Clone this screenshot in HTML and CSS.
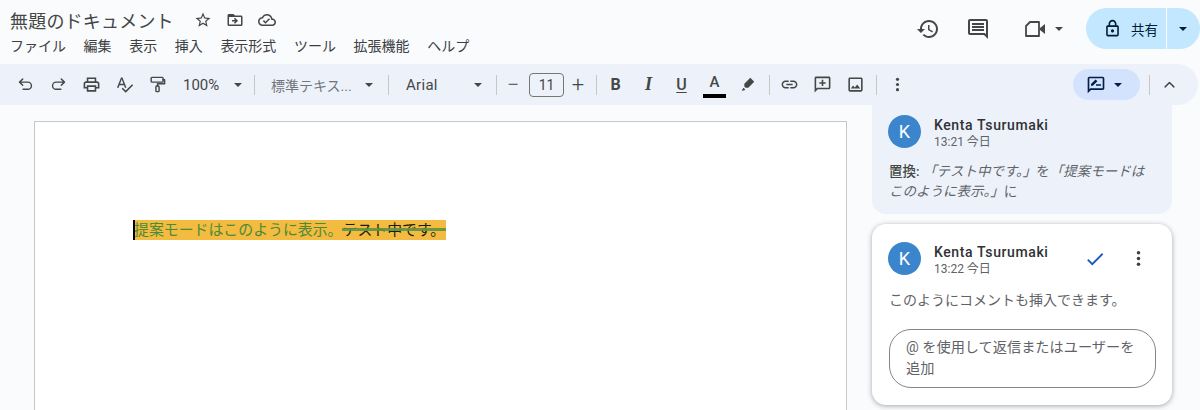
FILE: index.html
```html
<!DOCTYPE html>
<html lang="ja">
<head>
    <meta charset="UTF-8">
    <title>無題のドキュメント</title>
    <link rel="stylesheet" href="styles.css">
</head>
<body>

<header class="top-bar">
    <div class="title-area">
        <div class="title-row">
            <span class="doc-title">無題のドキュメント</span>
            <svg class="title-icon star" viewBox="0 0 24 24"><path d="M22 9.24l-7.19-.62L12 2 9.19 8.63 2 9.24l5.46 4.73L5.82 21 12 17.27 18.18 21l-1.63-7.03L22 9.24zM12 15.4l-3.76 2.27 1-4.28-3.32-2.88 4.38-.38L12 6.1l1.71 4.04 4.38.38-3.32 2.88 1 4.28L12 15.4z"/></svg>
            <svg class="title-icon" viewBox="0 0 24 24"><path d="M20 6h-8l-2-2H4c-1.1 0-1.99.9-1.99 2L2 18c0 1.1.9 2 2 2h16c1.1 0 2-.9 2-2V8c0-1.1-.9-2-2-2zm0 12H4V8h16v10zm-8.01-9l-1.41 1.41L12.16 12H8v2h4.16l-1.59 1.59L11.99 17 16 13.01 11.99 9z"/></svg>
            <svg class="title-icon" viewBox="0 0 24 24"><path d="M19.35 10.04C18.67 6.59 15.64 4 12 4 9.11 4 6.6 5.64 5.35 8.04 2.34 8.36 0 10.91 0 14c0 3.31 2.69 6 6 6h13c2.76 0 5-2.24 5-5 0-2.64-2.05-4.78-4.65-4.96zM19 18H6c-2.21 0-4-1.79-4-4 0-2.05 1.53-3.76 3.56-3.97l1.07-.11.5-.95C8.08 7.14 9.94 6 12 6c2.62 0 4.88 1.86 5.39 4.43l.3 1.5 1.53.11c1.56.1 2.78 1.41 2.78 2.96 0 1.65-1.35 3-3 3zm-9-3.82l-2.09-2.09L6.5 13.5 10 17l6.01-6.01-1.41-1.41z"/></svg>
        </div>
        <nav class="menu">
            <span>ファイル</span>
            <span>編集</span>
            <span>表示</span>
            <span>挿入</span>
            <span>表示形式</span>
            <span>ツール</span>
            <span>拡張機能</span>
            <span>ヘルプ</span>
        </nav>
    </div>
    <div class="top-actions">
        <svg class="top-icon" viewBox="0 0 24 24"><path d="M13 3c-4.97 0-9 4.03-9 9H1l3.89 3.89.07.14L9 12H6c0-3.87 3.13-7 7-7s7 3.13 7 7-3.13 7-7 7c-1.93 0-3.68-.79-4.94-2.06l-1.42 1.42C8.27 19.99 10.51 21 13 21c4.97 0 9-4.03 9-9s-4.03-9-9-9zm-1 5v5l4.28 2.54.72-1.21-3.5-2.08V8H12z"/></svg>
        <svg class="top-icon comment-icon" viewBox="0 0 24 24"><path d="M21.99 4c0-1.1-.89-2-1.99-2H4c-1.1 0-2 .9-2 2v12c0 1.1.9 2 2 2h14l4 4-.01-18zM20 4v13.17L18.83 16H4V4h16zM6 12h12v2H6zm0-3h12v2H6zm0-3h12v2H6z"/></svg>
        <svg class="top-icon video-icon" viewBox="0 0 24 24"><path class="line" d="M7 5H16V19H3V9Z"/><path d="M17 11l5-4v10l-5-4z"/></svg>
        <span class="caret meet-caret"></span>
        <div class="share">
            <div class="share-main">
                <svg class="lock" viewBox="0 0 24 24"><path d="M18 8h-1V6c0-2.76-2.24-5-5-5S7 3.24 7 6v2H6c-1.1 0-2 .9-2 2v10c0 1.1.9 2 2 2h12c1.1 0 2-.9 2-2V10c0-1.1-.9-2-2-2zM9 6c0-1.66 1.34-3 3-3s3 1.34 3 3v2H9V6zm9 14H6V10h12v10zm-6-3c1.1 0 2-.9 2-2s-.9-2-2-2-2 .9-2 2 .9 2 2 2z"/></svg>
                <span>共有</span>
            </div>
            <div class="share-more"><span class="caret dark"></span></div>
        </div>
    </div>
</header>

<div class="toolbar">
    <span class="tb-btn"><svg viewBox="0 0 24 24"><path class="line" d="M8.5 5 4.5 9l4 4M4.5 9H15a4.5 4.5 0 0 1 0 9H9"/></svg></span>
    <span class="tb-btn"><svg viewBox="0 0 24 24"><path class="line" d="M15.5 5l4 4-4 4M19.5 9H9a4.5 4.5 0 0 0 0 9h6"/></svg></span>
    <span class="tb-btn"><svg viewBox="0 0 24 24"><path d="M19 8h-1V3H6v5H5c-1.66 0-3 1.34-3 3v6h4v4h12v-4h4v-6c0-1.66-1.34-3-3-3zM8 5h8v3H8V5zm8 12v2H8v-4h8v2zm2-2v-2H6v2H4v-4c0-.55.45-1 1-1h14c.55 0 1 .45 1 1v4h-2z"/></svg></span>
    <span class="tb-btn"><svg viewBox="0 0 24 24"><path d="M12.45 16h2.09L9.43 3H7.57L2.46 16h2.09l1.12-3h5.64l1.14 3zm-6.02-5L8.5 5.48 10.57 11H6.43zm15.16.59l-8.09 8.09L9.83 16l-1.41 1.41 5.09 5.09L23 13l-1.41-1.41z"/></svg></span>
    <span class="tb-btn"><svg viewBox="0 0 24 24"><rect class="line" x="4" y="3" width="15" height="6" rx="1"/><path class="line" d="M19 6h2v5h-9v3"/><rect class="line" x="10" y="14" width="4" height="7" rx="1"/></svg></span>

    <div class="select zoom-select"><span>100%</span><i class="caret"></i></div>
    <span class="sep"></span>
    <div class="select style-select"><span>標準テキス...</span><i class="caret"></i></div>
    <span class="sep"></span>
    <div class="select font-select"><span>Arial</span><i class="caret"></i></div>
    <span class="sep"></span>

    <span class="size-btn minus">−</span>
    <span class="size-box">11</span>
    <span class="size-btn plus">+</span>
    <span class="sep sep-b"></span>

    <span class="tb-btn fmt bold">B</span>
    <span class="tb-btn fmt italic">I</span>
    <span class="tb-btn fmt under">U</span>
    <span class="tb-btn fmt color">A<i class="color-bar"></i></span>
    <span class="tb-btn"><svg viewBox="0 0 24 24"><path d="M15.5 3.5l5 5-7.5 7.5h-3.5l-1.5-1.5V11zM7 16l2 2-1 1.5H4.5z"/></svg></span>
    <span class="sep sep-l"></span>

    <span class="tb-btn"><svg viewBox="0 0 24 24"><path d="M3.9 12c0-1.71 1.39-3.1 3.1-3.1h4V7H7c-2.76 0-5 2.24-5 5s2.24 5 5 5h4v-1.9H7c-1.71 0-3.1-1.39-3.1-3.1zM8 13h8v-2H8v2zm9-6h-4v1.9h4c1.71 0 3.1 1.39 3.1 3.1s-1.39 3.1-3.1 3.1h-4V17h4c2.76 0 5-2.24 5-5s-2.24-5-5-5z"/></svg></span>
    <span class="tb-btn"><svg viewBox="0 0 24 24"><path d="M20 2H4c-1.1 0-2 .9-2 2v18l4-4h14c1.1 0 2-.9 2-2V4c0-1.1-.9-2-2-2zm0 14H5.17L4 17.17V4h16v12zM11 14h2v-3h3V9h-3V6h-2v3H8v2h3z"/></svg></span>
    <span class="tb-btn"><svg viewBox="0 0 24 24"><path d="M19 5v14H5V5h14m0-2H5c-1.1 0-2 .9-2 2v14c0 1.1.9 2 2 2h14c1.1 0 2-.9 2-2V5c0-1.1-.9-2-2-2zm-4.86 8.86l-3 3.87L9 13.14 6 17h12l-3.86-5.14z"/></svg></span>
    <span class="sep sep-m"></span>
    <span class="tb-btn"><svg viewBox="0 0 24 24"><circle cx="12" cy="5.5" r="2"/><circle cx="12" cy="12" r="2"/><circle cx="12" cy="18.5" r="2"/></svg></span>

    <div class="toolbar-end">
        <div class="mode-btn">
            <svg viewBox="0 0 24 24"><path d="M20 2H4c-1.1 0-2 .9-2 2v18l4-4h14c1.1 0 2-.9 2-2V4c0-1.1-.9-2-2-2zm0 14H5.17L4 17.17V4h16v12z"/><path d="M6 13v-2.2l5.5-5.5 2.2 2.2L8.2 13zM12 13h6v-2h-6z"/></svg>
            <i class="caret navy"></i>
        </div>
        <span class="sep"></span>
        <span class="tb-btn"><svg viewBox="0 0 24 24"><path class="line" d="M6.5 15l5.5-5.5 5.5 5.5"/></svg></span>
    </div>
</div>

<main class="workspace">
    <section class="page">
        <p class="doc-line"><span class="cursor"></span><span class="added">提案モードはこのように表示。</span><span class="removed">テスト中です。</span></p>
    </section>

    <aside class="comments">
        <article class="card suggestion">
            <div class="card-head">
                <span class="avatar">K</span>
                <div class="who">
                    <div class="name">Kenta Tsurumaki</div>
                    <div class="time">13:21 今日</div>
                </div>
            </div>
            <p class="card-text"><b>置換:</b> <em>「テスト中です。」</em>を<em>「提案モードは<br>このように表示。」</em>に</p>
        </article>

        <article class="card active">
            <div class="card-head">
                <span class="avatar">K</span>
                <div class="who">
                    <div class="name">Kenta Tsurumaki</div>
                    <div class="time">13:22 今日</div>
                </div>
                <svg class="resolve" viewBox="0 0 24 24"><path d="M9 16.17L4.83 12l-1.42 1.41L9 19 21 7l-1.41-1.41z"/></svg>
                <svg class="more" viewBox="0 0 24 24"><circle cx="12" cy="5.5" r="2"/><circle cx="12" cy="12" r="2"/><circle cx="12" cy="18.5" r="2"/></svg>
            </div>
            <p class="card-body">このようにコメントも挿入できます。</p>
            <div class="reply">@ を使用して返信またはユーザーを追加</div>
        </article>
    </aside>
</main>

</body>
</html>
```

FILE: styles.css
```css
* { box-sizing: border-box; }
html, body { margin: 0; height: 100%; }
body {
    background: #f9fbfd; color: #444746; overflow: hidden;
    font-family: Roboto, "Noto Sans CJK JP", sans-serif;
}
svg { display: block; fill: #444746; }

/* top */
.top-bar { height: 64px; display: flex; justify-content: space-between; }
.title-area { padding: 8px 0 0 10px; }
.title-row { display: flex; align-items: center; height: 23px; }
.doc-title { font-size: 18px; color: #444746; width: 164px; white-space: nowrap; letter-spacing: 0.2px; }
.title-icon { width: 18px; height: 18px; margin-left: 11px; margin-right: 3px; }
.title-icon.star { margin-left: 20px; }
.menu { display: flex; gap: 17.6px; margin-top: 5px; font-size: 14px; line-height: 20px; color: #3c4043; }

.top-actions { display: flex; align-items: center; height: 57px; }
.top-icon { width: 24px; height: 24px; margin-right: 26px; }
.comment-icon { margin-right: 33px; }
.video-icon { margin-right: 8px; }
.meet-caret { margin-right: 23px; }
.caret {
    display: inline-block; width: 0; height: 0;
    border-left: 4.5px solid transparent; border-right: 4.5px solid transparent;
    border-top: 4.5px solid #444746;
}
.caret.dark { border-top-color: #001d35; }
.caret.navy { border-top-color: #041e49; }

.share { display: flex; width: 114px; height: 41px; background: #c2e7ff; border-radius: 21px; color: #001d35; }
.share-main { width: 81px; display: flex; align-items: center; padding-left: 17px; font-size: 13.5px; border-right: 1px solid #f9fbfd; }
.share-main span { margin-left: 9px; }
.lock { width: 19px; height: 19px; fill: #001d35; }
.share-more { flex: 1; display: flex; align-items: center; justify-content: center; padding-right: 1px; }

/* toolbar */
.toolbar {
    position: relative; z-index: 2;
    height: 41px; margin-right: 2px; padding-left: 9px;
    display: flex; align-items: center;
    background: #edf2fa; border-radius: 0 21px 21px 0;
}
.tb-btn { width: 33px; height: 32px; display: flex; align-items: center; justify-content: center; flex-shrink: 0; }
.tb-btn svg { width: 19px; height: 19px; }
.line { fill: none; stroke: #444746; stroke-width: 1.8; stroke-linecap: round; stroke-linejoin: round; }
.sep { width: 1px; height: 20px; background: #c7c7c7; margin: 0 8px; flex-shrink: 0; }
.select { display: flex; align-items: center; justify-content: space-between; font-size: 14px; flex-shrink: 0; white-space: nowrap; }
.zoom-select { width: 72px; padding: 0 4px 0 9px; font-size: 15px; }
.style-select { width: 117px; padding: 0 7px 0 8px; color: #70757a; }
.font-select { width: 91px; padding: 0 6px 0 9px; font-size: 15px; letter-spacing: 0.3px; }
.size-btn { width: 16px; text-align: center; font-size: 22px; font-weight: 300; line-height: 24px; flex-shrink: 0; }
.plus { width: 28px; }
.size-box {
    width: 35px; height: 24px; margin: 0 0 0 8px; flex-shrink: 0;
    border: 1px solid #747775; border-radius: 4px;
    font-size: 14px; line-height: 22px; text-align: center;
}
.sep-b { margin: 0 2px 0 4px; }
.sep-l { margin: 0 3px 0 5px; }
.sep-m { margin: 0 4px 0 4px; }
.fmt { font-size: 16px; color: #444746; position: relative; }
.bold { font-weight: 700; }
.italic { font-family: "Liberation Serif", serif; font-style: italic; font-weight: 700; font-size: 18px; }
.under { text-decoration: underline; font-weight: 500; text-underline-offset: 2px; }
.color { align-items: flex-start; padding-top: 5px; font-size: 15px; line-height: 16px; font-weight: 500; }
.color-bar { position: absolute; left: 5px; right: 5px; bottom: 3px; height: 4px; background: #000; }

.toolbar-end { margin-left: auto; display: flex; align-items: center; }
.mode-btn {
    width: 67px; height: 31px; background: #d3e3fd; border-radius: 16px;
    display: flex; align-items: center; gap: 8px; padding-left: 13px;
}
.mode-btn svg { width: 20px; height: 20px; fill: #041e49; }
.toolbar-end .sep { margin: 0 3px 0 9px; }
.toolbar-end .tb-btn { margin-right: 12px; }

/* doc area: the page runs on below the window, so it is cut off here */
.workspace { display: flex; align-items: flex-start; height: 305px; padding-left: 34px; overflow: hidden; }
.page {
    width: 813px; height: 320px; margin-top: 16px; flex-shrink: 0;
    background: #fff; border: 1px solid #c7c7c7; padding: 98px 0 0 98px;
}
.doc-line { display: flex; position: relative; width: 313px; margin: 0; font-size: 14.9px; line-height: 20px; background: #f3bb3f; white-space: nowrap; }
.cursor { position: absolute; left: 0; top: 0; width: 2px; height: 20px; background: #000; }
.added { color: #4a8a3c; padding-left: 1px; }
.removed { flex: 1; position: relative; color: #1c1c0c; }
.removed::after { content: ""; position: absolute; left: 0; right: 0; top: 8px; height: 3px; background: #5c9440; opacity: 0.9; }

/* comments */
.comments { width: 300px; margin-left: 25px; display: flex; flex-direction: column; gap: 10px; }
.card { border-radius: 0 0 14px 14px; padding: 0 16px; }
.card-head { display: flex; align-items: flex-start; }
.avatar {
    width: 33px; height: 33px; border-radius: 50%; background: #3b85cc; color: #fff;
    font-size: 18px; line-height: 33px; text-align: center; flex-shrink: 0;
}
.who { margin: 1px 0 0 13px; width: 150px; }
.name { font-size: 14px; line-height: 18px; font-weight: 500; color: #303134; letter-spacing: 0.6px; white-space: nowrap; }
.time { font-size: 12px; line-height: 16px; color: #5f6368; }
.suggestion { height: 109px; background: #edf2fa; padding-top: 10px; }
.card-text { margin: 11px 0 0 1px; font-size: 13.5px; line-height: 20px; color: #5f6368; white-space: nowrap; }
.card-text b { font-weight: 500; color: #444746; }
.active { height: 181px; background: #fff; border-radius: 14px; padding-top: 18px; margin-bottom: 5px; box-shadow: 0 1px 5px rgba(60,64,67,0.45); }
.resolve { width: 22px; height: 22px; margin: 6px 0 0 0; fill: #1a56c4; }
.more { width: 21px; height: 21px; margin: 6px 0 0 22px; fill: #3c4043; }
.card-body { margin: 13px 0 0 1px; font-size: 14px; line-height: 20px; color: #5f6368; white-space: nowrap; }
.reply {
    width: 267px; height: 59px; margin: 19px 0 0 1px; padding: 7px 16px;
    border: 1px solid #80868b; border-radius: 22px;
    font-size: 14.2px; line-height: 21px; color: #5f6368;
}
```
